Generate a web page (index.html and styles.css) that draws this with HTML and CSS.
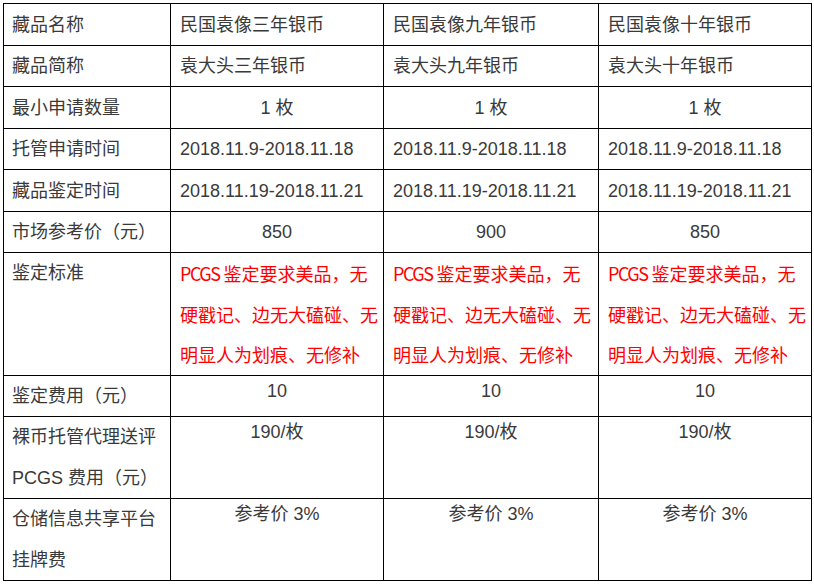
FILE: index.html
```html
<!DOCTYPE html>
<html lang="zh-CN">
<head>
<meta charset="utf-8">
<title>藏品信息</title>
<link rel="stylesheet" href="styles.css">
</head>
<body>
<table class="info">
  <colgroup>
    <col class="c-label">
    <col class="c-val2">
    <col class="c-val3">
    <col class="c-val4">
  </colgroup>
  <tbody>
    <tr class="r42">
      <td class="label">藏品名称</td>
      <td class="val">民国袁像三年银币</td>
      <td class="val">民国袁像九年银币</td>
      <td class="val">民国袁像十年银币</td>
    </tr>
    <tr class="r41">
      <td class="label">藏品简称</td>
      <td class="val">袁大头三年银币</td>
      <td class="val">袁大头九年银币</td>
      <td class="val">袁大头十年银币</td>
    </tr>
    <tr class="r42">
      <td class="label">最小申请数量</td>
      <td class="val center">1 枚</td>
      <td class="val center">1 枚</td>
      <td class="val center">1 枚</td>
    </tr>
    <tr class="r41">
      <td class="label">托管申请时间</td>
      <td class="val">2018.11.9-2018.11.18</td>
      <td class="val">2018.11.9-2018.11.18</td>
      <td class="val">2018.11.9-2018.11.18</td>
    </tr>
    <tr class="r42">
      <td class="label">藏品鉴定时间</td>
      <td class="val">2018.11.19-2018.11.21</td>
      <td class="val">2018.11.19-2018.11.21</td>
      <td class="val">2018.11.19-2018.11.21</td>
    </tr>
    <tr class="r41">
      <td class="label">市场参考价（元）</td>
      <td class="val center">850</td>
      <td class="val center">900</td>
      <td class="val center">850</td>
    </tr>
    <tr class="r123">
      <td class="label top">鉴定标准</td>
      <td class="val red"><span class="latin">PCGS</span> 鉴定要求美品，无<br>硬戳记、边无大磕碰、无<br>明显人为划痕、无修补</td>
      <td class="val red"><span class="latin">PCGS</span> 鉴定要求美品，无<br>硬戳记、边无大磕碰、无<br>明显人为划痕、无修补</td>
      <td class="val red"><span class="latin">PCGS</span> 鉴定要求美品，无<br>硬戳记、边无大磕碰、无<br>明显人为划痕、无修补</td>
    </tr>
    <tr class="r41">
      <td class="label">鉴定费用（元）</td>
      <td class="val center fee">10</td>
      <td class="val center fee">10</td>
      <td class="val center fee">10</td>
    </tr>
    <tr class="r82">
      <td class="label top multi">裸币托管代理送评<br>PCGS 费用（元）</td>
      <td class="val center fee">190/枚</td>
      <td class="val center fee">190/枚</td>
      <td class="val center fee">190/枚</td>
    </tr>
    <tr class="r82">
      <td class="label top multi">仓储信息共享平台<br>挂牌费</td>
      <td class="val center fee">参考价 3%</td>
      <td class="val center fee">参考价 3%</td>
      <td class="val center fee">参考价 3%</td>
    </tr>
  </tbody>
</table>
</body>
</html>
```
FILE: styles.css
```css
html, body {
  margin: 0;
  padding: 0;
  background: #ffffff;
}

body {
  padding: 3px 0 0 3px;
  font-family: "Liberation Sans", "Noto Sans CJK SC", sans-serif;
  font-size: 18px;
  color: #3a3a3a;
}

.info {
  border-collapse: collapse;
  table-layout: fixed;
  width: 808px;
}

.c-label { width: 167px; }
.c-val2 { width: 213px; }
.c-val3 { width: 215px; }
.c-val4 { width: 213px; }

.info td {
  border: 1px solid #000000;
  padding: 0 8px;
  line-height: 40px;
  vertical-align: middle;
  white-space: nowrap;
  overflow: hidden;
}

.info td.val {
  padding: 0 9px;
}

.r41 td { height: 40px; }
.r42 td { height: 41px; }
.r123 td { height: 122px; }
.r82 td { height: 81px; }

.info td.top {
  vertical-align: top;
}

.info td.multi {
  line-height: 40.5px;
}

.info td.center {
  text-align: center;
}

.info td.red {
  color: #ff0000;
  vertical-align: top;
  line-height: 40.6px;
  font-family: "Noto Sans CJK SC", sans-serif;
}

.latin {
  letter-spacing: -1.5px;
}

.info td.fee {
  vertical-align: top;
  line-height: 30px;
}
```
